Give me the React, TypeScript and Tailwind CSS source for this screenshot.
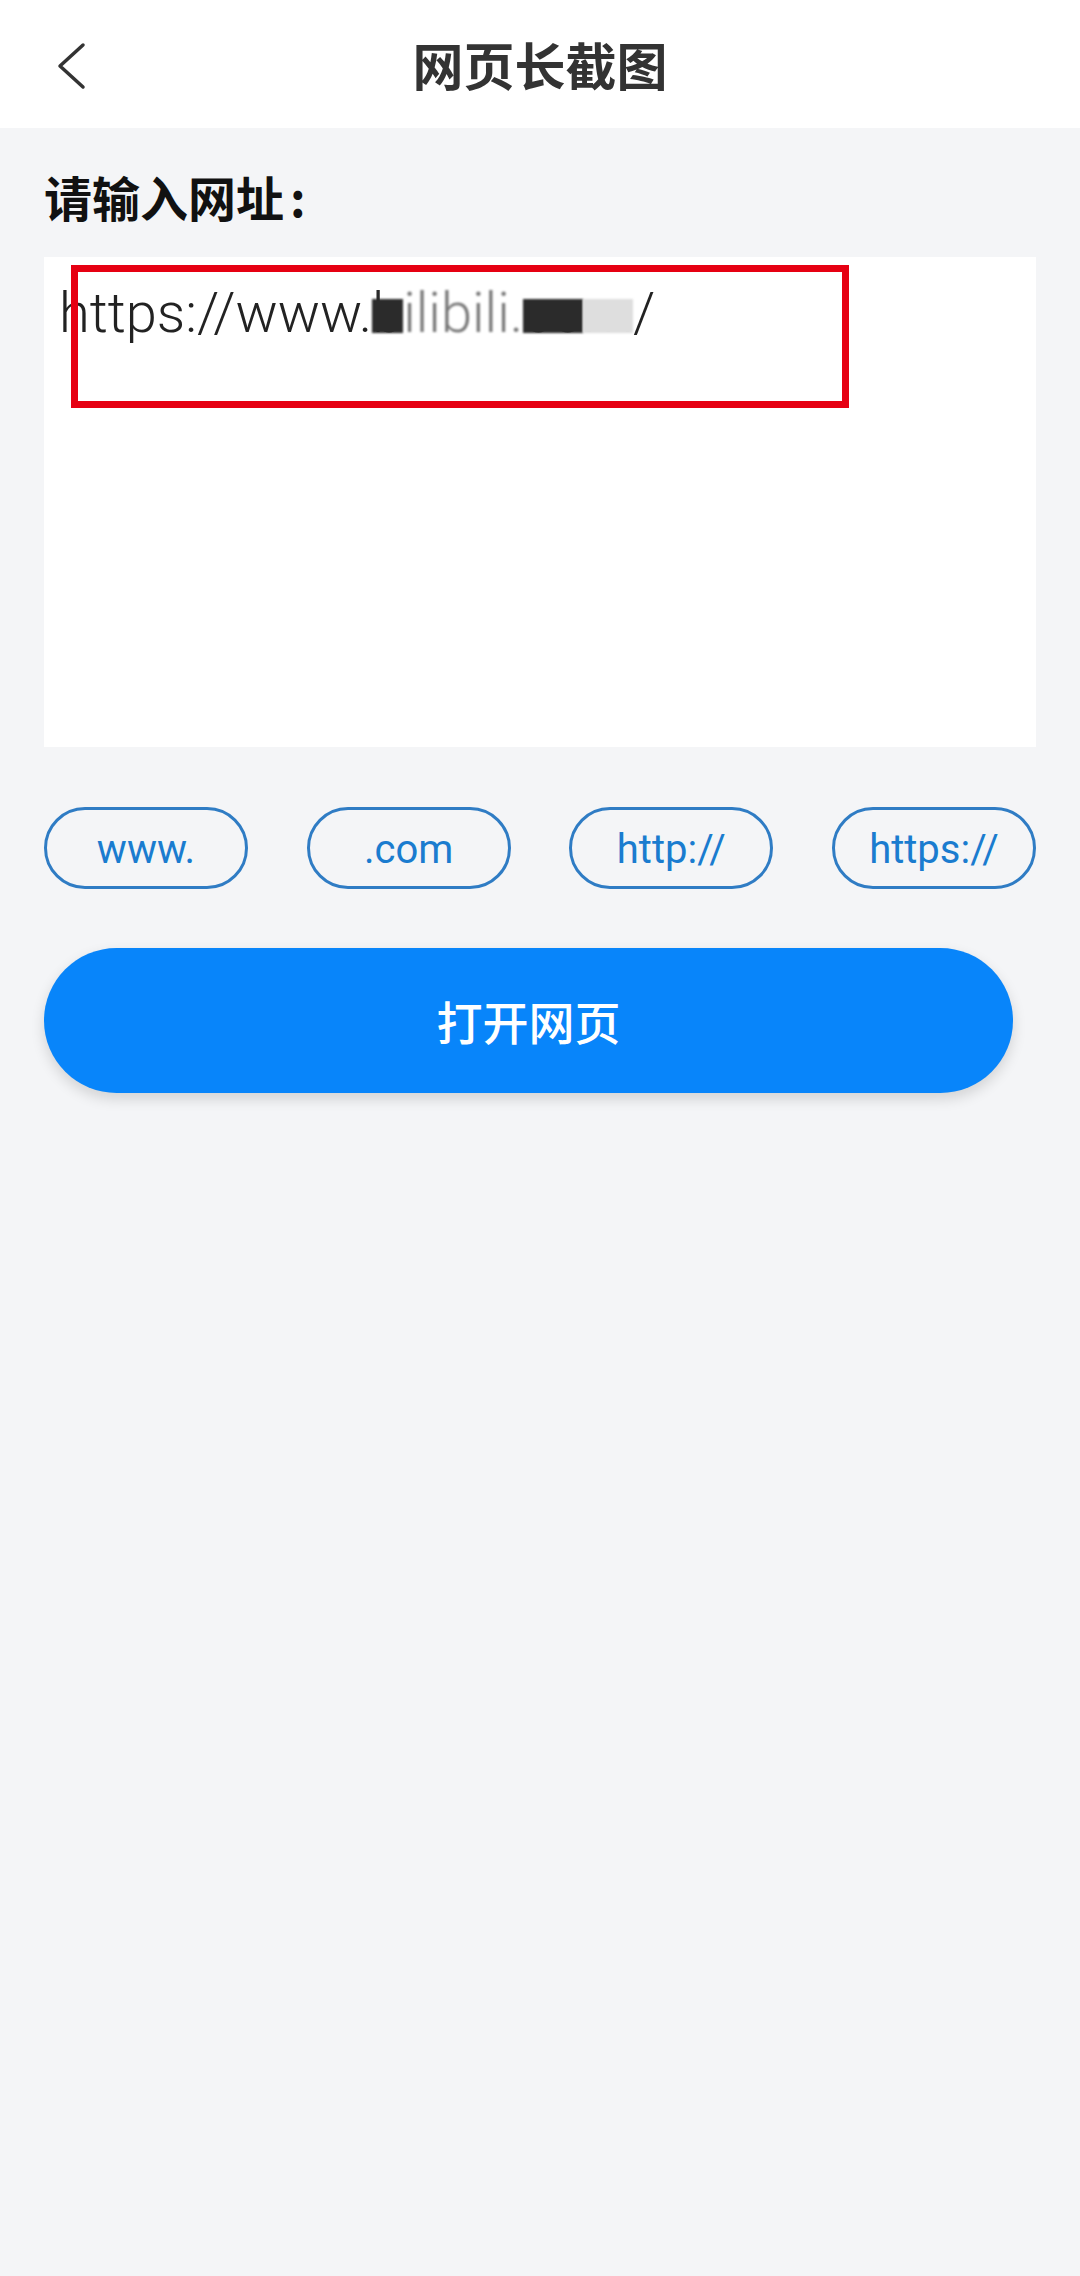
import React from "react";

const cjk = "font-['Noto_Sans_CJK_SC','Noto_Sans',sans-serif]";

const chips = ["www.", ".com", "http://", "https://"];

// blurred mask laid over part of the url, like the screenshot's redaction
function Masked({ text, color, textColor }: { text: string; color: string; textColor: string }) {
  return (
    <span className="relative" style={{ color: textColor }}>
      {text}
      <span
        className="absolute inset-x-0 bottom-[13px] h-[34px] blur-[1px]"
        style={{ backgroundColor: color }}
      />
    </span>
  );
}

export default function App() {
  return (
    <div className="min-h-[2276px] w-[1080px] bg-[#f4f5f7]">
      {/* header */}
      <div className="relative flex h-[128px] items-center justify-center bg-white">
        <button className="absolute left-[52px] top-[38px] flex h-[56px] w-[38px] items-center justify-center">
          <svg width="30" height="48" viewBox="0 0 30 48" fill="none">
            <path
              d="M27 3 L4 24 L27 45"
              stroke="#333333"
              strokeWidth="3.5"
              strokeLinecap="round"
              strokeLinejoin="round"
            />
          </svg>
        </button>
        <h1 className={`${cjk} text-[51px] font-bold leading-none text-[#333333]`}>
          网页长截图
        </h1>
      </div>

      <div className="px-[44px]">
        <div className={`${cjk} pt-[39px] text-[48px] font-bold leading-[58px] text-[#111111]`}>
          请输入网址<span className="ml-[6px]">:</span>
        </div>

        {/* url input */}
        <div className="relative mt-[32px] h-[490px] bg-white px-[15px] pt-[20px]">
          <div className="font-['Roboto','Noto_Sans',sans-serif] text-[56px] font-light leading-[72px] text-[#222222]">
            https://www.
            <Masked text="b" color="#2b2b2b" textColor="#2b2b2b" />
            <span className="text-[#777777] blur-[1px]">ilibili.</span>
            <Masked text="co" color="#2b2b2b" textColor="#2b2b2b" />
            <Masked text="m" color="#dedede" textColor="#dedede" />
            /
          </div>
          {/* annotation box */}
          <div className="pointer-events-none absolute left-[27px] top-[8px] h-[143px] w-[778px] border-[7px] border-[#e60012]" />
        </div>

        {/* quick chips */}
        <div className="mt-[60px] flex justify-between">
          {chips.map((c) => (
            <button
              key={c}
              className="flex h-[82px] w-[204px] items-center justify-center rounded-full border-[3px] border-[#2f7cc4] pt-[4px] font-['Roboto','Noto_Sans',sans-serif] text-[40px] text-[#1a7ccf]"
            >
              {c}
            </button>
          ))}
        </div>

        {/* open */}
        <button
          className={`${cjk} mt-[59px] flex h-[145px] w-[969px] items-center justify-center rounded-full bg-[#0885fa] text-[46px] font-medium text-white shadow-[0_6px_14px_rgba(0,0,0,0.14)]`}
        >
          打开网页
        </button>
      </div>
    </div>
  );
}
